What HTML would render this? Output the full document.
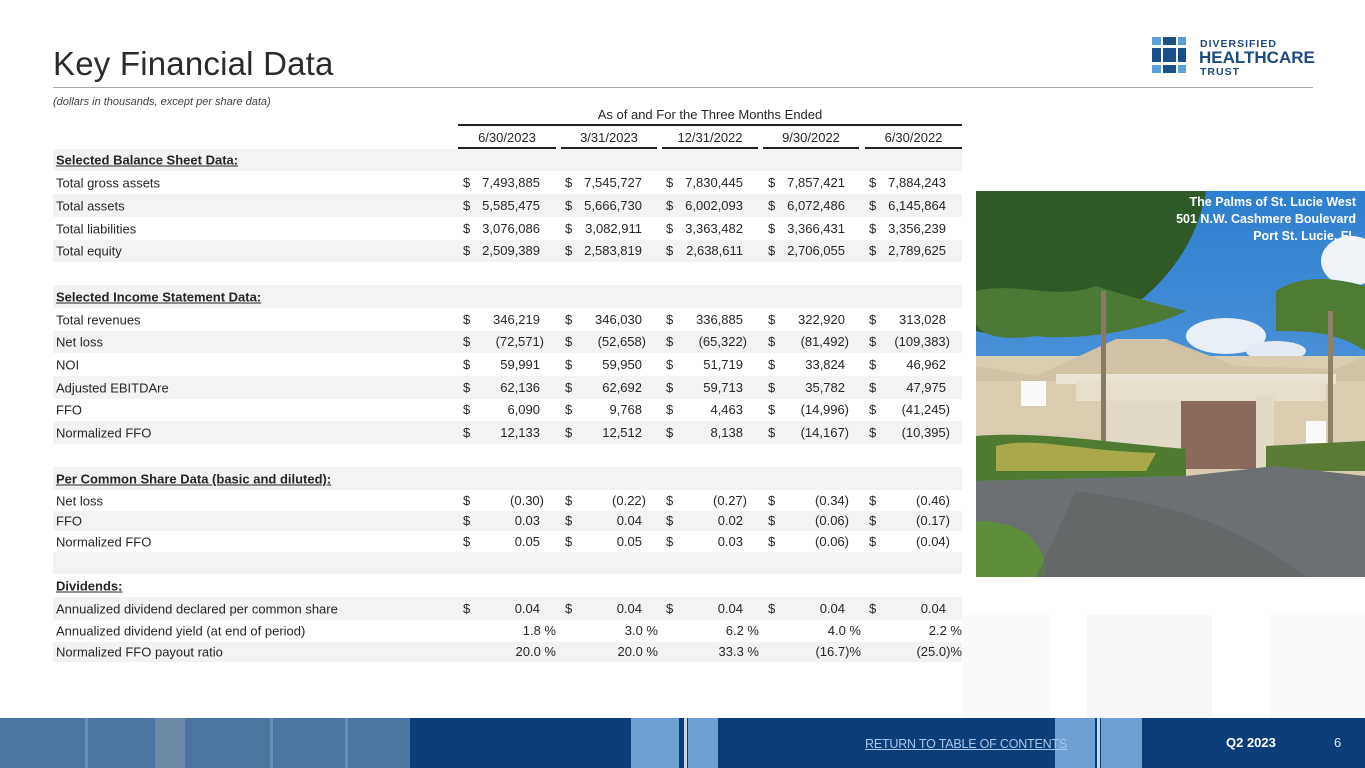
<!DOCTYPE html>
<html><head><meta charset="utf-8"><style>
*{margin:0;padding:0;box-sizing:border-box}
body{width:1365px;height:768px;position:relative;overflow:hidden;background:#fff;font-family:"Liberation Sans",sans-serif;color:#262626}
.t{position:absolute;left:53px;top:45px;font-size:33px;color:#2b2b2b;letter-spacing:0.2px}
.hr{position:absolute;left:53px;top:87px;width:1260px;height:1px;background:#a6a6a6}
.sub{position:absolute;left:53px;top:96px;font-size:11px;font-style:italic;color:#404040}
.r{position:absolute;left:53px;width:909px;font-size:13px}
.s{background:#f3f3f4}
.r .l{position:absolute;left:3px;top:50%;transform:translateY(-50%);white-space:nowrap}
.r b.l{text-decoration:underline;font-weight:bold;color:#262626}
.c{position:absolute;top:50%;transform:translateY(-50%);width:98px;height:16px;line-height:16px}
.c i{font-style:normal;position:absolute;left:5px}
.c span{position:absolute;right:16px}
.c span.n{right:12px}
.c span.p{right:0px}
.hd{position:absolute;font-size:13px;text-align:center}
.ul{position:absolute;height:1.5px;background:#222}
.foot{position:absolute;left:0;top:718px;width:1365px;height:50px;background:#0b3d78}
</style></head><body>
<!-- faint background blocks -->
<div style="position:absolute;left:963px;top:615px;width:87px;height:103px;background:#fafafa"></div>
<div style="position:absolute;left:1087px;top:615px;width:125px;height:103px;background:#f7f7f7"></div>
<div style="position:absolute;left:1270px;top:615px;width:95px;height:103px;background:#fafafa"></div>

<div class="t">Key Financial Data</div>
<div class="hr"></div>
<div class="sub">(dollars in thousands, except per share data)</div>

<!-- logo -->
<svg style="position:absolute;left:1150px;top:36px" width="170" height="40">
<rect x="2" y="1" width="9" height="8" fill="#5aa0db"/><rect x="13" y="1" width="13" height="8" fill="#1a4f8b"/><rect x="28" y="1" width="8" height="8" fill="#5aa0db"/>
<rect x="2" y="12" width="9" height="14" fill="#1a4f8b"/><rect x="13" y="12" width="13" height="14" fill="#1a4f8b"/><rect x="28" y="12" width="8" height="14" fill="#1a4f8b"/>
<rect x="2" y="29" width="9" height="8" fill="#5aa0db"/><rect x="13" y="29" width="13" height="8" fill="#1a4f8b"/><rect x="28" y="29" width="8" height="8" fill="#5aa0db"/>
<text x="50" y="11" font-family="Liberation Sans" font-weight="bold" font-size="10.5" fill="#1d4a80" letter-spacing="1">DIVERSIFIED</text>
<text x="49" y="27" font-family="Liberation Sans" font-weight="bold" font-size="17" fill="#1d4a80">HEALTHCARE</text>
<text x="50" y="39" font-family="Liberation Sans" font-weight="bold" font-size="10.5" fill="#1d4a80" letter-spacing="1">TRUST</text>
</svg>

<div class="hd" style="left:458px;width:504px;top:107px">As of and For the Three Months Ended</div>
<div class="ul" style="left:458px;width:504px;top:124px"></div>
<div class="hd" style="left:458px;width:98px;top:130px">6/30/2023</div>
<div class="hd" style="left:561px;width:96px;top:130px">3/31/2023</div>
<div class="hd" style="left:662px;width:96px;top:130px">12/31/2022</div>
<div class="hd" style="left:763px;width:96px;top:130px">9/30/2022</div>
<div class="hd" style="left:865px;width:97px;top:130px">6/30/2022</div>
<div class="ul" style="left:458px;width:98px;top:147px"></div>
<div class="ul" style="left:561px;width:96px;top:147px"></div>
<div class="ul" style="left:662px;width:96px;top:147px"></div>
<div class="ul" style="left:763px;width:96px;top:147px"></div>
<div class="ul" style="left:865px;width:97px;top:147px"></div>

<div class="r s" style="top:149px;height:22px"><b class="l">Selected Balance Sheet Data:</b></div>
<div class="r" style="top:171px;height:23px"><span class="l">Total gross assets</span>
<div class="c" style="left:405px"><i>$</i><span>7,493,885</span></div><div class="c" style="left:507px"><i>$</i><span>7,545,727</span></div><div class="c" style="left:608px"><i>$</i><span>7,830,445</span></div><div class="c" style="left:710px"><i>$</i><span>7,857,421</span></div><div class="c" style="left:811px"><i>$</i><span>7,884,243</span></div></div>
<div class="r s" style="top:194px;height:23px"><span class="l">Total assets</span>
<div class="c" style="left:405px"><i>$</i><span>5,585,475</span></div><div class="c" style="left:507px"><i>$</i><span>5,666,730</span></div><div class="c" style="left:608px"><i>$</i><span>6,002,093</span></div><div class="c" style="left:710px"><i>$</i><span>6,072,486</span></div><div class="c" style="left:811px"><i>$</i><span>6,145,864</span></div></div>
<div class="r" style="top:217px;height:23px"><span class="l">Total liabilities</span>
<div class="c" style="left:405px"><i>$</i><span>3,076,086</span></div><div class="c" style="left:507px"><i>$</i><span>3,082,911</span></div><div class="c" style="left:608px"><i>$</i><span>3,363,482</span></div><div class="c" style="left:710px"><i>$</i><span>3,366,431</span></div><div class="c" style="left:811px"><i>$</i><span>3,356,239</span></div></div>
<div class="r s" style="top:240px;height:22px"><span class="l">Total equity</span>
<div class="c" style="left:405px"><i>$</i><span>2,509,389</span></div><div class="c" style="left:507px"><i>$</i><span>2,583,819</span></div><div class="c" style="left:608px"><i>$</i><span>2,638,611</span></div><div class="c" style="left:710px"><i>$</i><span>2,706,055</span></div><div class="c" style="left:811px"><i>$</i><span>2,789,625</span></div></div>
<div class="r" style="top:262px;height:23px"></div>
<div class="r s" style="top:285px;height:23px"><b class="l">Selected Income Statement Data:</b></div>
<div class="r" style="top:308px;height:23px"><span class="l">Total revenues</span>
<div class="c" style="left:405px"><i>$</i><span>346,219</span></div><div class="c" style="left:507px"><i>$</i><span>346,030</span></div><div class="c" style="left:608px"><i>$</i><span>336,885</span></div><div class="c" style="left:710px"><i>$</i><span>322,920</span></div><div class="c" style="left:811px"><i>$</i><span>313,028</span></div></div>
<div class="r s" style="top:331px;height:22px"><span class="l">Net loss</span>
<div class="c" style="left:405px"><i>$</i><span class="n">(72,571)</span></div><div class="c" style="left:507px"><i>$</i><span class="n">(52,658)</span></div><div class="c" style="left:608px"><i>$</i><span class="n">(65,322)</span></div><div class="c" style="left:710px"><i>$</i><span class="n">(81,492)</span></div><div class="c" style="left:811px"><i>$</i><span class="n">(109,383)</span></div></div>
<div class="r" style="top:353px;height:23px"><span class="l">NOI</span>
<div class="c" style="left:405px"><i>$</i><span>59,991</span></div><div class="c" style="left:507px"><i>$</i><span>59,950</span></div><div class="c" style="left:608px"><i>$</i><span>51,719</span></div><div class="c" style="left:710px"><i>$</i><span>33,824</span></div><div class="c" style="left:811px"><i>$</i><span>46,962</span></div></div>
<div class="r s" style="top:376px;height:23px"><span class="l">Adjusted EBITDAre</span>
<div class="c" style="left:405px"><i>$</i><span>62,136</span></div><div class="c" style="left:507px"><i>$</i><span>62,692</span></div><div class="c" style="left:608px"><i>$</i><span>59,713</span></div><div class="c" style="left:710px"><i>$</i><span>35,782</span></div><div class="c" style="left:811px"><i>$</i><span>47,975</span></div></div>
<div class="r" style="top:399px;height:22px"><span class="l">FFO</span>
<div class="c" style="left:405px"><i>$</i><span>6,090</span></div><div class="c" style="left:507px"><i>$</i><span>9,768</span></div><div class="c" style="left:608px"><i>$</i><span>4,463</span></div><div class="c" style="left:710px"><i>$</i><span class="n">(14,996)</span></div><div class="c" style="left:811px"><i>$</i><span class="n">(41,245)</span></div></div>
<div class="r s" style="top:421px;height:23px"><span class="l">Normalized FFO</span>
<div class="c" style="left:405px"><i>$</i><span>12,133</span></div><div class="c" style="left:507px"><i>$</i><span>12,512</span></div><div class="c" style="left:608px"><i>$</i><span>8,138</span></div><div class="c" style="left:710px"><i>$</i><span class="n">(14,167)</span></div><div class="c" style="left:811px"><i>$</i><span class="n">(10,395)</span></div></div>
<div class="r" style="top:444px;height:23px"></div>
<div class="r s" style="top:467px;height:23px"><b class="l">Per Common Share Data (basic and diluted):</b></div>
<div class="r" style="top:490px;height:21px"><span class="l">Net loss</span>
<div class="c" style="left:405px"><i>$</i><span class="n">(0.30)</span></div><div class="c" style="left:507px"><i>$</i><span class="n">(0.22)</span></div><div class="c" style="left:608px"><i>$</i><span class="n">(0.27)</span></div><div class="c" style="left:710px"><i>$</i><span class="n">(0.34)</span></div><div class="c" style="left:811px"><i>$</i><span class="n">(0.46)</span></div></div>
<div class="r s" style="top:511px;height:20px"><span class="l">FFO</span>
<div class="c" style="left:405px"><i>$</i><span>0.03</span></div><div class="c" style="left:507px"><i>$</i><span>0.04</span></div><div class="c" style="left:608px"><i>$</i><span>0.02</span></div><div class="c" style="left:710px"><i>$</i><span class="n">(0.06)</span></div><div class="c" style="left:811px"><i>$</i><span class="n">(0.17)</span></div></div>
<div class="r" style="top:531px;height:21px"><span class="l">Normalized FFO</span>
<div class="c" style="left:405px"><i>$</i><span>0.05</span></div><div class="c" style="left:507px"><i>$</i><span>0.05</span></div><div class="c" style="left:608px"><i>$</i><span>0.03</span></div><div class="c" style="left:710px"><i>$</i><span class="n">(0.06)</span></div><div class="c" style="left:811px"><i>$</i><span class="n">(0.04)</span></div></div>
<div class="r s" style="top:552px;height:22px"></div>
<div class="r" style="top:574px;height:23px"><b class="l">Dividends:</b></div>
<div class="r s" style="top:597px;height:23px"><span class="l">Annualized dividend declared per common share</span>
<div class="c" style="left:405px"><i>$</i><span>0.04</span></div><div class="c" style="left:507px"><i>$</i><span>0.04</span></div><div class="c" style="left:608px"><i>$</i><span>0.04</span></div><div class="c" style="left:710px"><i>$</i><span>0.04</span></div><div class="c" style="left:811px"><i>$</i><span>0.04</span></div></div>
<div class="r" style="top:620px;height:22px"><span class="l">Annualized dividend yield (at end of period)</span>
<div class="c" style="left:405px"><span class="p">1.8 %</span></div><div class="c" style="left:507px"><span class="p">3.0 %</span></div><div class="c" style="left:608px"><span class="p">6.2 %</span></div><div class="c" style="left:710px"><span class="p">4.0 %</span></div><div class="c" style="left:811px"><span class="p">2.2 %</span></div></div>
<div class="r s" style="top:642px;height:20px"><span class="l">Normalized FFO payout ratio</span>
<div class="c" style="left:405px"><span class="p">20.0 %</span></div><div class="c" style="left:507px"><span class="p">20.0 %</span></div><div class="c" style="left:608px"><span class="p">33.3 %</span></div><div class="c" style="left:710px"><span class="p">(16.7)%</span></div><div class="c" style="left:811px"><span class="p">(25.0)%</span></div></div>

<!-- photo -->
<svg style="position:absolute;left:976px;top:191px" width="389" height="386" viewBox="0 0 389 386">
<defs><linearGradient id="sky" x1="0" y1="0" x2="0" y2="1"><stop offset="0" stop-color="#2f7fd0"/><stop offset="1" stop-color="#6aa6df"/></linearGradient></defs>
<rect width="389" height="386" fill="url(#sky)"/>
<ellipse cx="250" cy="145" rx="40" ry="18" fill="#e8eff6"/>
<ellipse cx="375" cy="70" rx="30" ry="25" fill="#eef3f8"/>
<ellipse cx="300" cy="160" rx="30" ry="10" fill="#e3ecf5"/>
<rect x="0" y="165" width="389" height="120" fill="#d9ccb0"/>
<polygon points="60,185 140,148 190,148 260,175 360,178 389,165 389,190 0,190 0,175" fill="#cfc2a6"/>
<rect x="80" y="183" width="280" height="10" fill="#e9e4d6"/>
<rect x="100" y="190" width="250" height="20" fill="#e5dfcc"/>
<rect x="200" y="210" width="90" height="68" fill="#8a6a5c"/>
<rect x="130" y="210" width="75" height="70" fill="#e1dac7"/>
<rect x="280" y="205" width="18" height="75" fill="#e1dac7"/>
<rect x="45" y="190" width="25" height="25" fill="#fafafa"/>
<rect x="330" y="230" width="20" height="22" fill="#fafafa"/>
<path d="M0 0 H230 C220 60 180 100 150 120 C100 140 40 150 0 140 Z" fill="#2f5a25"/>
<path d="M0 100 C40 90 80 110 120 95 C150 105 190 115 210 120 C170 140 100 150 60 145 C30 150 0 145 0 130Z" fill="#4a7a34"/>
<path d="M300 100 C330 80 370 90 389 95 V160 C360 140 330 140 300 140Z" fill="#4e7c33"/>
<rect x="125" y="100" width="5" height="170" fill="#8b7a62"/>
<rect x="352" y="120" width="5" height="160" fill="#8f8068"/>
<path d="M0 245 C60 240 120 250 210 258 L210 285 L0 290Z" fill="#4f7a30"/>
<path d="M20 255 C60 245 100 260 180 262 L170 280 L20 280Z" fill="#a9a84a"/>
<path d="M290 255 L389 250 L389 280 L290 280Z" fill="#5a7a35"/>
<path d="M0 290 L210 285 L300 275 L389 285 V386 H0Z" fill="#6c7072"/>
<path d="M0 330 C40 330 70 345 70 386 H0Z" fill="#5f8f3a"/>
<path d="M100 300 C180 310 260 330 330 386 H60 Z" fill="#5d6163" opacity="0.6"/>
<text x="380" y="15" text-anchor="end" font-family="Liberation Sans" font-weight="bold" font-size="12.5" fill="#fff">The Palms of St. Lucie West</text>
<text x="380" y="32" text-anchor="end" font-family="Liberation Sans" font-weight="bold" font-size="12.5" fill="#fff">501 N.W. Cashmere Boulevard</text>
<text x="380" y="49" text-anchor="end" font-family="Liberation Sans" font-weight="bold" font-size="12.5" fill="#fff">Port St. Lucie, FL</text>
</svg>

<!-- footer -->
<div class="foot">
<div style="position:absolute;left:0;top:0;width:410px;height:50px;background:#4b76a1"></div>
<div style="position:absolute;left:85px;top:0;width:3px;height:50px;background:#6a8fb3"></div>
<div style="position:absolute;left:155px;top:0;width:30px;height:50px;background:#6c8aa8"></div>
<div style="position:absolute;left:270px;top:0;width:3px;height:50px;background:#6a8fb3"></div>
<div style="position:absolute;left:345px;top:0;width:3px;height:50px;background:#6a8fb3"></div>
<div style="position:absolute;left:631px;top:0;width:48px;height:50px;background:#6fa0d2"></div>
<div style="position:absolute;left:684px;top:0;width:3px;height:50px;background:#c8d6e6"></div>
<div style="position:absolute;left:688px;top:0;width:30px;height:50px;background:#6fa0d2"></div>
<div style="position:absolute;left:1055px;top:0;width:40px;height:50px;background:#6fa0d2"></div>
<div style="position:absolute;left:1097px;top:0;width:3px;height:50px;background:#c8d6e6"></div>
<div style="position:absolute;left:1101px;top:0;width:41px;height:50px;background:#6fa0d2"></div>
<div style="position:absolute;left:865px;top:19px;font-size:12.5px;letter-spacing:-0.2px;color:#a9c8ee;text-decoration:underline">RETURN TO TABLE OF CONTENTS</div>
<div style="position:absolute;left:1226px;top:17px;font-size:13px;color:#fff;font-weight:bold">Q2 2023</div>
<div style="position:absolute;left:1334px;top:17px;font-size:13px;color:#e0e8f2">6</div>
</div>
</body></html>
